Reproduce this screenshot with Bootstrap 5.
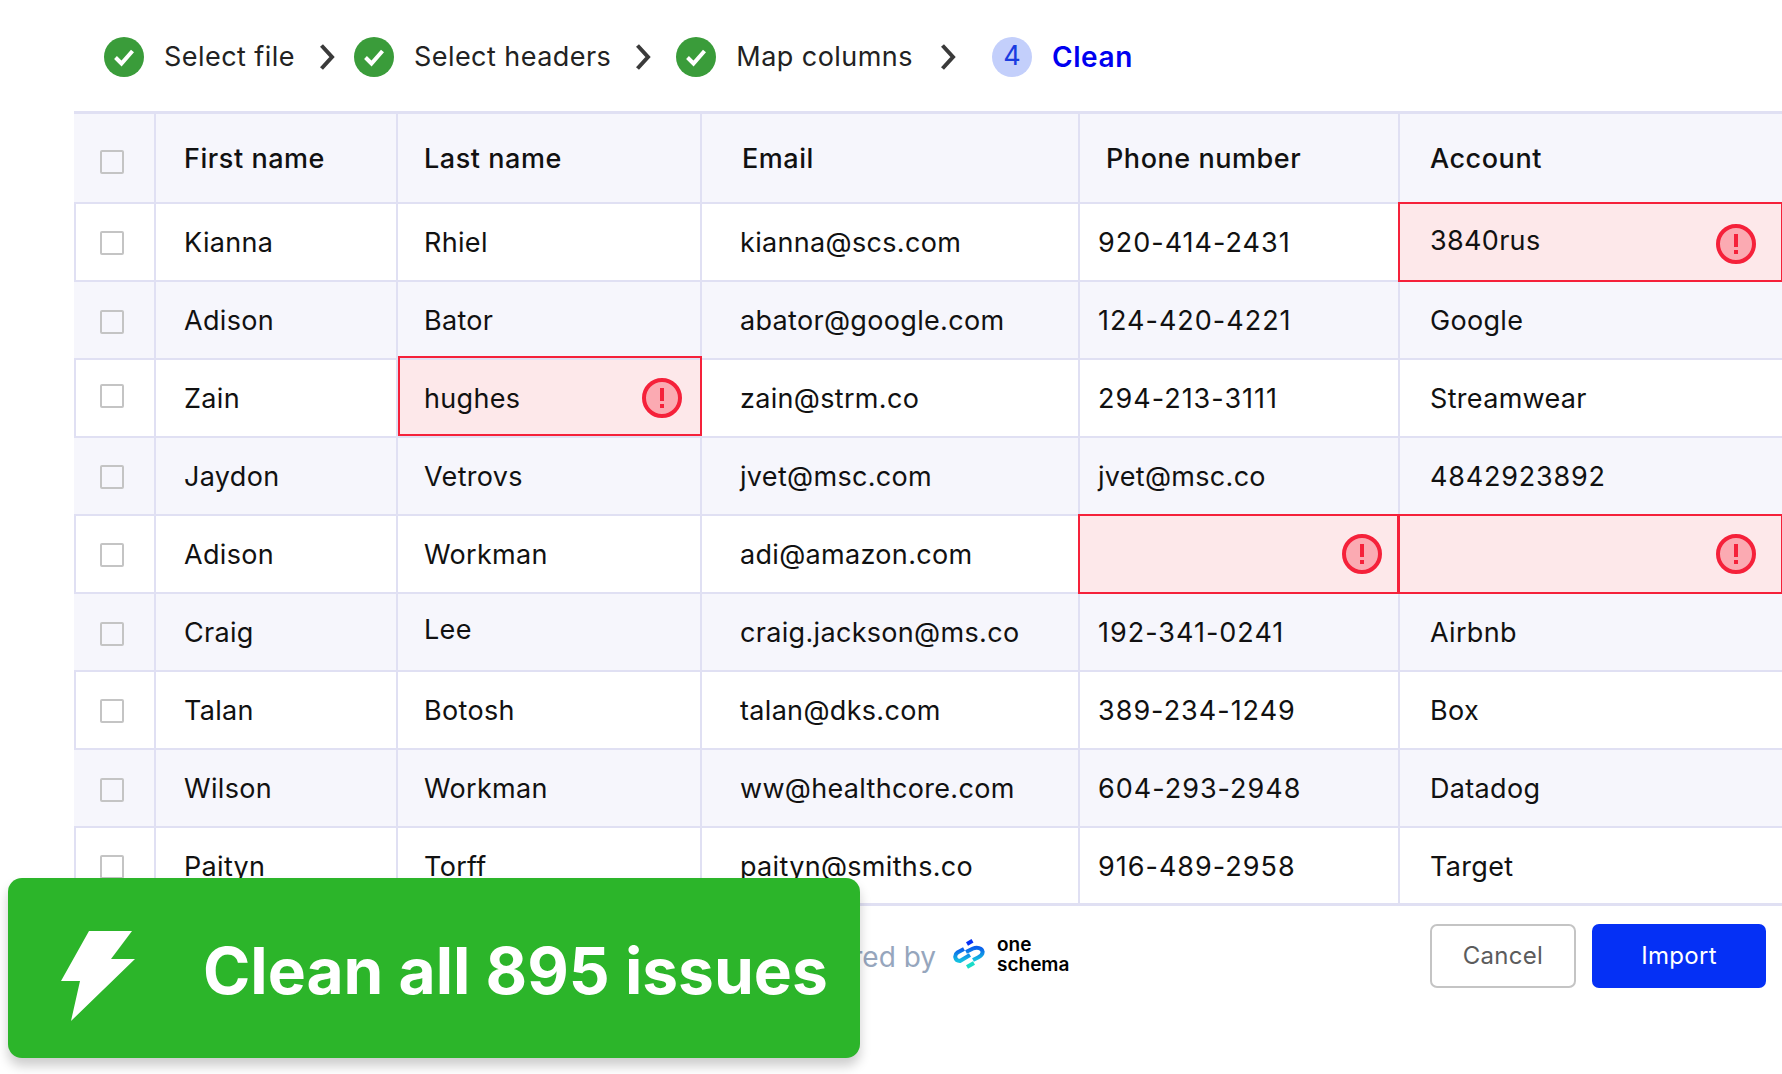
<!DOCTYPE html>
<html lang="en">
<head>
<meta charset="utf-8">
<title>Clean</title>
<link href="https://cdn.jsdelivr.net/npm/bootstrap@5.3.0/dist/css/bootstrap.min.css" rel="stylesheet">
<style>
html,body{height:1074px;overflow:hidden;background:#fff}
body{font-family:Inter,"Liberation Sans",sans-serif;color:#111;position:relative;width:1782px}
.stepper{height:111px;padding-left:104px;padding-top:2px;font-size:27px;color:#222}
.step-ok{width:40px;height:40px;flex:none}
.step-label{margin-left:20px;letter-spacing:.45px;padding-top:2px}
.step-chev{width:16px;height:28px;margin:0 19px 0 24px;flex:none}
.step-chev.chev-wide{margin-right:25px}
.step-chev.chev-last{margin-left:27px}
.step-num{width:40px;height:40px;border-radius:50%;background:#c3cffb;color:#1a3ce0;margin-left:17px;flex:none}
.step-cur{color:#0000f0;font-weight:600;margin-left:20px;font-size:28px;letter-spacing:.6px}
.sheet{margin-left:74px;width:1708px;table-layout:fixed;border-collapse:collapse;font-size:27px;margin-bottom:0;letter-spacing:.32px}
.sheet>:not(caption)>*>*{padding:4px 0 0 29px;border:2px solid #e0e0f3;background:#fff;color:#111;box-shadow:none;vertical-align:middle;height:78px}
.sheet th{font-weight:500;height:90px;background:#f6f6fc;border-top-width:3px;letter-spacing:.55px;padding-top:2px}
.sheet tbody tr:nth-child(even)>*{background:#f6f6fc}
.sheet thead tr>:first-child,.sheet tbody tr:nth-child(even)>:first-child{border-left-color:#f6f6fc}
.sheet tr>:last-child{border-right:0}
.sheet tr>:first-child{padding:3px 0 0 24px}
.sheet thead tr>:first-child{padding-top:9px}
.sheet tr>.cell-cb-up{padding-top:0;padding-bottom:3px}
.sheet tr>.cell-cb-dn{padding-top:5px}
.cb{display:block;width:24px;height:24px;border:2px solid #c4c4c4;border-radius:2px;background:transparent}
.sheet .col-first{padding-left:28px}
.sheet .col-last{padding-left:26px}
.sheet .cell-mail{padding-left:38px}
.sheet .cell-phone{padding-left:18px;letter-spacing:1px}
.sheet .cell-phone.cell-text{letter-spacing:.3px}
.sheet .cell-num{letter-spacing:.8px}
.sheet .cell-lee{padding-top:0;padding-bottom:3px}
.sheet th.head-mail{padding-left:40px}
.sheet th.head-phone{padding-left:26px}
.sheet .col-acct{padding-left:30px}
.sheet tbody tr:last-child>*{border-bottom-width:3px}
.sheet .cell-bad,.sheet tbody tr:nth-child(even)>.cell-bad{background:#fde8ea;position:relative;padding-top:0}
.cell-bad::after{content:"";position:absolute;inset:-2px -1px -2px -2px;border:2px solid #f5213a;pointer-events:none}
.cell-bad.bad-up::after{inset:-4px -2px 0 0}
.bad-row{display:flex;align-items:center;justify-content:space-between;padding-right:26px}
.bad-row.bad-name{padding-right:18px}
.bad-row.bad-phone{padding-right:16px}
.bad-name .bad-val{padding-top:4px}
.bad-first .bad-ico{margin-top:4px}
.bad-ico{width:40px;height:40px;flex:none}
.foot{height:91px;padding-top:18px}
.powered{color:#96a6bd;font-size:28px;margin-left:736px;width:200px;white-space:nowrap;padding-top:12px}
.logo-mark{width:32px;height:32px;flex:none;margin-left:17px;margin-top:15px}
.logo-name{font-size:19px;font-weight:600;line-height:19.500px;color:#000;margin-left:12px;margin-top:11px}
.btn-quiet,.btn-go{height:64px;font-size:24px;border-radius:7px;padding:0;display:flex;align-items:center;justify-content:center;letter-spacing:.3px}
.btn-quiet{width:146px;border:2px solid #c4c4c4;color:#5c5c5c;background:#fff;margin-left:auto}
.btn-go{width:174px;border:0;background:#0530f5;color:#fff;margin-left:16px;margin-right:16px}
.banner{position:absolute;left:8px;top:878px;width:852px;height:180px;background:#2cb52a;border-radius:14px;color:#fff;box-shadow:0 8px 12px rgba(0,0,0,.2)}
.banner svg{width:90px;height:98px;margin-left:42px;margin-top:24px;flex:none}
.banner-text{font-size:64px;font-weight:700;margin-left:63px;padding-top:5px;white-space:nowrap}
</style>
</head>
<body>
<div class="stepper d-flex align-items-center">
  <svg class="step-ok" viewBox="0 0 40 40"><circle cx="20" cy="20" r="20" fill="#3a9c3a"/><path d="M11.500 20.500 17.500 26.500 28.500 14" fill="none" stroke="#fff" stroke-width="4"/></svg>
  <span class="step-label">Select file</span>
  <svg class="step-chev" viewBox="0 0 16 28"><path d="M2.500 2.500 13 14 2.500 25.500" fill="none" stroke="#3a3a3a" stroke-width="4"/></svg>
  <svg class="step-ok" viewBox="0 0 40 40"><circle cx="20" cy="20" r="20" fill="#3a9c3a"/><path d="M11.500 20.500 17.500 26.500 28.500 14" fill="none" stroke="#fff" stroke-width="4"/></svg>
  <span class="step-label">Select headers</span>
  <svg class="step-chev chev-wide" viewBox="0 0 16 28"><path d="M2.500 2.500 13 14 2.500 25.500" fill="none" stroke="#3a3a3a" stroke-width="4"/></svg>
  <svg class="step-ok" viewBox="0 0 40 40"><circle cx="20" cy="20" r="20" fill="#3a9c3a"/><path d="M11.500 20.500 17.500 26.500 28.500 14" fill="none" stroke="#fff" stroke-width="4"/></svg>
  <span class="step-label">Map columns</span>
  <svg class="step-chev chev-last" viewBox="0 0 16 28"><path d="M2.500 2.500 13 14 2.500 25.500" fill="none" stroke="#3a3a3a" stroke-width="4"/></svg>
  <span class="step-num d-flex align-items-center justify-content-center">4</span>
  <span class="step-cur">Clean</span>
</div>
<table class="table sheet">
  <colgroup><col style="width:80px"><col style="width:242px"><col style="width:304px"><col style="width:378px"><col style="width:320px"><col></colgroup>
  <thead><tr><th><span class="cb"></span></th><th class="col-first">First name</th><th class="col-last">Last name</th><th class="head-mail">Email</th><th class="head-phone">Phone number</th><th class="col-acct">Account</th></tr></thead>
  <tbody>
    <tr><td><span class="cb"></span></td><td class="col-first">Kianna</td><td class="col-last">Rhiel</td><td class="cell-mail">kianna@scs.com</td><td class="cell-phone">920-414-2431</td><td class="cell-bad col-acct"><div class="bad-row bad-first"><span class="bad-val">3840rus</span><svg class="bad-ico" viewBox="0 0 40 40"><circle cx="20" cy="20" r="18" fill="#fbaab2" stroke="#f5213a" stroke-width="4"/><rect x="18" y="10" width="4" height="13" fill="#f5213a"/><rect x="18" y="26" width="4" height="4" fill="#f5213a"/></svg></div></td></tr>
    <tr><td class="cell-cb-dn"><span class="cb"></span></td><td class="col-first">Adison</td><td class="col-last">Bator</td><td class="cell-mail">abator@google.com</td><td class="cell-phone">124-420-4221</td><td class="col-acct">Google</td></tr>
    <tr><td class="cell-cb-up"><span class="cb"></span></td><td class="col-first">Zain</td><td class="cell-bad bad-up col-last"><div class="bad-row bad-name"><span class="bad-val">hughes</span><svg class="bad-ico" viewBox="0 0 40 40"><circle cx="20" cy="20" r="18" fill="#fbaab2" stroke="#f5213a" stroke-width="4"/><rect x="18" y="10" width="4" height="13" fill="#f5213a"/><rect x="18" y="26" width="4" height="4" fill="#f5213a"/></svg></div></td><td class="cell-mail">zain@strm.co</td><td class="cell-phone">294-213-3111</td><td class="col-acct">Streamwear</td></tr>
    <tr><td><span class="cb"></span></td><td class="col-first">Jaydon</td><td class="col-last">Vetrovs</td><td class="cell-mail">jvet@msc.com</td><td class="cell-phone cell-text">jvet@msc.co</td><td class="col-acct cell-num">4842923892</td></tr>
    <tr><td><span class="cb"></span></td><td class="col-first">Adison</td><td class="col-last">Workman</td><td class="cell-mail">adi@amazon.com</td><td class="cell-bad"><div class="bad-row bad-phone justify-content-end"><svg class="bad-ico" viewBox="0 0 40 40"><circle cx="20" cy="20" r="18" fill="#fbaab2" stroke="#f5213a" stroke-width="4"/><rect x="18" y="10" width="4" height="13" fill="#f5213a"/><rect x="18" y="26" width="4" height="4" fill="#f5213a"/></svg></div></td><td class="cell-bad"><div class="bad-row justify-content-end"><svg class="bad-ico" viewBox="0 0 40 40"><circle cx="20" cy="20" r="18" fill="#fbaab2" stroke="#f5213a" stroke-width="4"/><rect x="18" y="10" width="4" height="13" fill="#f5213a"/><rect x="18" y="26" width="4" height="4" fill="#f5213a"/></svg></div></td></tr>
    <tr><td class="cell-cb-dn"><span class="cb"></span></td><td class="col-first">Craig</td><td class="col-last cell-lee">Lee</td><td class="cell-mail">craig.jackson@ms.co</td><td class="cell-phone">192-341-0241</td><td class="col-acct">Airbnb</td></tr>
    <tr><td><span class="cb"></span></td><td class="col-first">Talan</td><td class="col-last">Botosh</td><td class="cell-mail">talan@dks.com</td><td class="cell-phone">389-234-1249</td><td class="col-acct">Box</td></tr>
    <tr><td class="cell-cb-dn"><span class="cb"></span></td><td class="col-first">Wilson</td><td class="col-last">Workman</td><td class="cell-mail">ww@healthcore.com</td><td class="cell-phone">604-293-2948</td><td class="col-acct">Datadog</td></tr>
    <tr><td><span class="cb"></span></td><td class="col-first">Paityn</td><td class="col-last">Torff</td><td class="cell-mail">paityn@smiths.co</td><td class="cell-phone">916-489-2958</td><td class="col-acct">Target</td></tr>
  </tbody>
</table>
<div class="foot d-flex align-items-start">
  <span class="powered d-flex align-items-center justify-content-end">Powered by</span>
  <svg class="logo-mark" viewBox="0 0 32 32"><defs><linearGradient id="lg" x1="0" y1="0" x2="0" y2="1"><stop offset="0" stop-color="#0a5fec"/><stop offset="1" stop-color="#14bfe0"/></linearGradient></defs><g fill="none" stroke-width="4"><path d="M14 5 19.500 1.800" stroke="#0530f5"/><path d="M11 10 4.500 13.500C1 16 1.500 22 7 22L17 16" stroke="url(#lg)"/><path d="M13 13 20 9.500C24 8 29 9 29.500 12.500 30 15 28 17 25 18.500L20 21" stroke="url(#lg)"/><path d="M14 28 21 24" stroke="#19dcc8"/></g></svg>
  <span class="logo-name">one<br>schema</span>
  <button type="button" class="btn btn-quiet">Cancel</button>
  <button type="button" class="btn btn-go">Import</button>
</div>
<div class="banner d-flex align-items-center">
  <svg viewBox="0 0 90 98"><polygon points="39,0 82,0 61,28 85,28 21,90 30,50 11,50" fill="#fff"/></svg>
  <span class="banner-text">Clean all 895 issues</span>
</div>
<script src="https://cdn.jsdelivr.net/npm/bootstrap@5.3.0/dist/js/bootstrap.bundle.min.js"></script>
</body>
</html>
